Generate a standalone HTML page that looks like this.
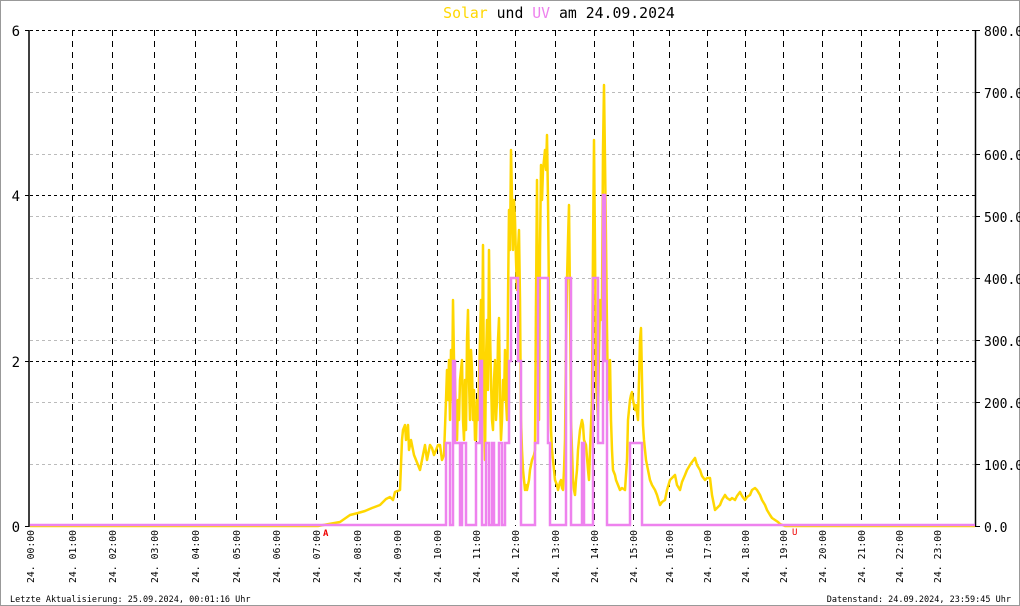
<!DOCTYPE html>
<html><head><meta charset="utf-8"><style>
html,body{margin:0;padding:0;background:#fff}
svg{display:block}
text{font-family:"DejaVu Sans Mono","Liberation Mono",monospace}
</style></head><body>
<svg width="1020" height="606" xmlns="http://www.w3.org/2000/svg">
<rect x="0.5" y="0.5" width="1019" height="605" fill="#fff" stroke="#999"/>
<g stroke="#bbb" stroke-dasharray="3,3" stroke-width="1">
<line x1="30" y1="464.5" x2="975" y2="464.5"/><line x1="30" y1="402.5" x2="975" y2="402.5"/>
<line x1="30" y1="340.5" x2="975" y2="340.5"/><line x1="30" y1="278.5" x2="975" y2="278.5"/>
<line x1="30" y1="216.5" x2="975" y2="216.5"/><line x1="30" y1="154.5" x2="975" y2="154.5"/>
<line x1="30" y1="92.5" x2="975" y2="92.5"/>
</g>
<g stroke="#000" stroke-dasharray="3,3" stroke-width="1">
<line x1="30" y1="30.5" x2="975" y2="30.5"/><line x1="30" y1="195.5" x2="975" y2="195.5"/><line x1="30" y1="361.5" x2="975" y2="361.5"/>
</g>
<g stroke="#000" stroke-dasharray="6,5" stroke-width="1">
<line x1="72.5" y1="30" x2="72.5" y2="526"/><line x1="112.5" y1="30" x2="112.5" y2="526"/><line x1="154.5" y1="30" x2="154.5" y2="526"/><line x1="195.5" y1="30" x2="195.5" y2="526"/><line x1="236.5" y1="30" x2="236.5" y2="526"/><line x1="276.5" y1="30" x2="276.5" y2="526"/><line x1="316.5" y1="30" x2="316.5" y2="526"/><line x1="357.5" y1="30" x2="357.5" y2="526"/><line x1="397.5" y1="30" x2="397.5" y2="526"/><line x1="437.5" y1="30" x2="437.5" y2="526"/><line x1="476.5" y1="30" x2="476.5" y2="526"/><line x1="515.5" y1="30" x2="515.5" y2="526"/><line x1="555.5" y1="30" x2="555.5" y2="526"/><line x1="594.5" y1="30" x2="594.5" y2="526"/><line x1="633.5" y1="30" x2="633.5" y2="526"/><line x1="669.5" y1="30" x2="669.5" y2="526"/><line x1="707.5" y1="30" x2="707.5" y2="526"/><line x1="745.5" y1="30" x2="745.5" y2="526"/><line x1="783.5" y1="30" x2="783.5" y2="526"/><line x1="822.5" y1="30" x2="822.5" y2="526"/><line x1="861.5" y1="30" x2="861.5" y2="526"/><line x1="899.5" y1="30" x2="899.5" y2="526"/><line x1="937.5" y1="30" x2="937.5" y2="526"/>
</g>
<g stroke="#000" stroke-width="1.5">
<line x1="29" y1="30" x2="29" y2="527"/><line x1="975.5" y1="30" x2="975.5" y2="527"/>
</g>
<g stroke="#000" stroke-width="1">
<line x1="25" y1="30.5" x2="29" y2="30.5"/><line x1="25" y1="195.5" x2="29" y2="195.5"/><line x1="25" y1="361.5" x2="29" y2="361.5"/><line x1="25" y1="526.5" x2="29" y2="526.5"/>
<line x1="975" y1="30.5" x2="980" y2="30.5"/><line x1="975" y1="92.5" x2="980" y2="92.5"/><line x1="975" y1="154.5" x2="980" y2="154.5"/><line x1="975" y1="216.5" x2="980" y2="216.5"/><line x1="975" y1="278.5" x2="980" y2="278.5"/><line x1="975" y1="340.5" x2="980" y2="340.5"/><line x1="975" y1="402.5" x2="980" y2="402.5"/><line x1="975" y1="464.5" x2="980" y2="464.5"/><line x1="975" y1="526.5" x2="980" y2="526.5"/>
</g>
<polyline fill="none" stroke="#FFD700" stroke-width="2.5" stroke-linejoin="round" points="30,526 318,526 340,522 350,515 358,513 365,511 372,508 380,505 386,499 390,497 393,500 395,492 400,490 402,440 403,430 405,425 406,440 408,425 409,450 411,440 412,445 414,455 416,460 418,465 420,470 423,455 425,445 427,460 428,455 430,445 432,448 434,455 436,450 438,445 440,445 442,460 444,455 446,400 447,370 448,400 449,360 450,420 451,350 452,400 453,300 454,360 455,380 456,420 457,440 458,400 459,420 460,380 462,360 463,420 464,440 465,380 466,430 467,340 468,310 469,380 470,420 471,350 472,370 473,420 474,390 475,440 476,440 477,400 478,420 479,380 481,300 482,360 483,245 484,400 485,460 486,360 487,320 488,390 489,250 490,330 491,380 492,420 493,430 494,380 495,360 496,420 497,400 498,340 499,318 500,400 501,440 502,420 503,380 504,400 505,350 506,400 507,420 508,300 509,210 510,250 511,150 512,200 513,250 514,200 515,220 516,260 517,290 518,250 519,230 520,300 521,420 522,450 523,470 524,480 525,490 526,485 527,490 529,480 530,470 532,460 534,455 535,450 536,300 537,180 538,300 539,420 540,250 541,165 542,200 543,170 544,160 545,150 546,170 547,135 548,200 549,300 550,380 551,430 552,450 553,460 554,470 555,480 557,485 558,490 560,482 561,480 562,488 563,490 564,470 565,440 566,350 567,280 568,240 569,205 570,300 571,420 572,450 573,480 574,490 575,495 576,480 577,470 578,450 580,430 582,420 583,425 584,440 586,445 588,470 589,480 590,450 592,400 593,250 594,140 595,250 596,380 597,400 598,420 599,350 600,300 601,320 602,300 603,150 604,85 605,160 606,240 607,330 608,400 609,380 610,360 611,420 612,450 613,470 615,475 616,480 618,485 620,490 622,488 625,490 627,460 628,420 630,400 631,395 632,392 633,400 635,410 636,405 638,420 639,380 640,340 641,328 642,380 643,425 644,440 646,460 648,470 650,480 652,485 655,490 657,495 660,505 662,502 665,500 667,490 670,480 672,478 675,475 677,485 680,490 682,482 685,475 687,470 690,465 692,462 695,458 697,465 700,470 702,476 705,480 707,478 710,478 712,495 715,510 717,508 720,505 722,500 725,495 727,498 730,500 732,498 735,500 737,496 740,492 742,496 745,500 747,497 750,495 752,490 755,488 757,490 760,495 762,500 765,505 767,510 770,515 772,518 775,520 778,522 780,524 785,526 975,526"/>
<polyline fill="none" stroke="#EE82EE" stroke-width="2.5" points="30,525 446,525 446,443 450,443 450,525 453,525 453,361 455,361 455,443 460,443 460,525 462,525 462,443 466,443 466,525 476,525 476,443 480,443 480,361 482,361 482,525 486,525 486,443 489,443 489,525 492,525 492,443 494,443 494,525 499,525 499,443 502,443 502,525 505,525 505,443 509,443 509,361 511,361 511,278 518,278 518,361 521,361 521,525 535,525 535,443 538,443 538,278 548,278 548,443 550,443 550,525 566,525 566,278 571,278 571,525 582,525 582,443 584,443 584,525 593,525 593,278 598,278 598,443 603,443 603,195 605,195 605,361 607,361 607,525 630,525 630,443 642,443 642,525 975,525"/>
<text x="323" y="536" font-size="9" fill="#e00" font-weight="bold">A</text>
<text x="792" y="535" font-size="9" fill="#e00">U</text>
<text x="559" y="18" font-size="14.8" text-anchor="middle"><tspan fill="#FFD700">Solar</tspan> und <tspan fill="#EE82EE">UV</tspan> am 24.09.2024</text>
<g font-size="14" text-anchor="end"><text x="20" y="36">6</text><text x="20" y="201">4</text><text x="20" y="367">2</text><text x="20" y="532">0</text></g>
<g font-size="13"><text x="984" y="36">800.0</text><text x="984" y="98">700.0</text><text x="984" y="160">600.0</text><text x="984" y="222">500.0</text><text x="984" y="284">400.0</text><text x="984" y="346">300.0</text><text x="984" y="408">200.0</text><text x="984" y="470">100.0</text><text x="984" y="532">0.0</text></g>
<g font-size="9.8" fill="#000">
<text transform="translate(34,583) rotate(-90)">24. 00:00</text>
<text transform="translate(76,583) rotate(-90)">24. 01:00</text>
<text transform="translate(116,583) rotate(-90)">24. 02:00</text>
<text transform="translate(158,583) rotate(-90)">24. 03:00</text>
<text transform="translate(199,583) rotate(-90)">24. 04:00</text>
<text transform="translate(240,583) rotate(-90)">24. 05:00</text>
<text transform="translate(280,583) rotate(-90)">24. 06:00</text>
<text transform="translate(320,583) rotate(-90)">24. 07:00</text>
<text transform="translate(361,583) rotate(-90)">24. 08:00</text>
<text transform="translate(401,583) rotate(-90)">24. 09:00</text>
<text transform="translate(441,583) rotate(-90)">24. 10:00</text>
<text transform="translate(480,583) rotate(-90)">24. 11:00</text>
<text transform="translate(519,583) rotate(-90)">24. 12:00</text>
<text transform="translate(559,583) rotate(-90)">24. 13:00</text>
<text transform="translate(598,583) rotate(-90)">24. 14:00</text>
<text transform="translate(637,583) rotate(-90)">24. 15:00</text>
<text transform="translate(673,583) rotate(-90)">24. 16:00</text>
<text transform="translate(711,583) rotate(-90)">24. 17:00</text>
<text transform="translate(749,583) rotate(-90)">24. 18:00</text>
<text transform="translate(787,583) rotate(-90)">24. 19:00</text>
<text transform="translate(826,583) rotate(-90)">24. 20:00</text>
<text transform="translate(865,583) rotate(-90)">24. 21:00</text>
<text transform="translate(903,583) rotate(-90)">24. 22:00</text>
<text transform="translate(941,583) rotate(-90)">24. 23:00</text>
</g>
<text x="10" y="602" font-size="8.5">Letzte Aktualisierung: 25.09.2024, 00:01:16 Uhr</text>
<text x="1011" y="602" font-size="8.5" text-anchor="end">Datenstand: 24.09.2024, 23:59:45 Uhr</text>
</svg>
</body></html>
